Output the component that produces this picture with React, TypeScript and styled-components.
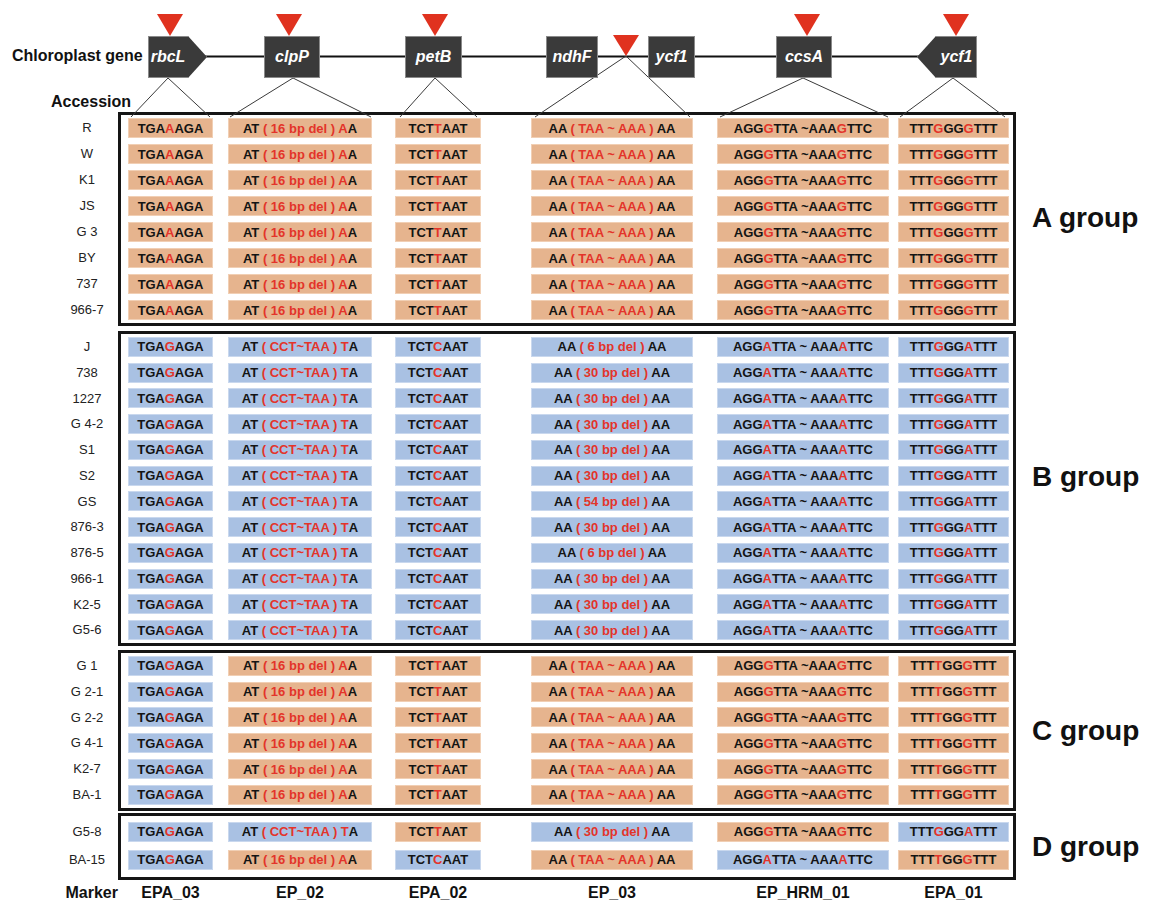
import React from 'react';
import styled, { createGlobalStyle } from 'styled-components';

const GlobalStyle = createGlobalStyle`
  html, body { margin: 0; padding: 0; background: #ffffff; }
  body { font-family: "Liberation Sans", Arial, sans-serif; color: #111111; }
  * { box-sizing: border-box; }
`;

const RED = '#e3342a';

const Page = styled.div`
  width: 1154px;
  height: 915px;
  overflow: hidden;
  background: #ffffff;
`;

const Header = styled.div`
  position: relative;
  height: 112px;
  display: flex;
  flex-direction: column;
`;

const GeneTitle = styled.div`
  margin: 47px 0 0 12px;
  font-size: 16px;
  font-weight: 700;
  line-height: 18px;
  white-space: nowrap;
`;

const AccessionTitle = styled.div`
  margin: 28px 0 0 51px;
  font-size: 16px;
  font-weight: 700;
  line-height: 18px;
`;

const MapSvg = styled.svg`
  position: absolute;
  left: 0;
  top: 0;
  overflow: visible;
  pointer-events: none;
`;

const GeneNode = styled.div<{ $x: number; $w: number; $arrow?: 'left' | 'right' }>`
  position: absolute;
  top: 36px;
  left: ${(p) => p.$x}px;
  width: ${(p) => p.$w}px;
  height: 42px;
  background: #3a3a3a;
  border: 1px solid #8a8a8a;
  color: #ffffff;
  font-size: 16px;
  font-weight: 700;
  font-style: italic;
  display: flex;
  align-items: center;
  justify-content: center;
  padding-right: ${(p) => (p.$arrow === 'right' ? 19 : 0)}px;
  padding-left: ${(p) => (p.$arrow === 'left' ? 19 : 0)}px;
  clip-path: ${(p) =>
    p.$arrow === 'right'
      ? 'polygon(0 0, calc(100% - 19px) 0, 100% 50%, calc(100% - 19px) 100%, 0 100%)'
      : p.$arrow === 'left'
      ? 'polygon(19px 0, 100% 0, 100% 100%, 19px 100%, 0 50%)'
      : 'none'};
`;

const Groups = styled.div`
  display: flex;
  flex-direction: column;
  padding-left: 56px;
`;

const GroupSection = styled.div<{ $mt: number }>`
  display: flex;
  align-items: center;
  margin-top: ${(p) => p.$mt}px;
`;

const LabelCol = styled.div<{ $pt: number }>`
  width: 62px;
  align-self: flex-start;
  padding-top: ${(p) => p.$pt + 3}px;
  display: flex;
  flex-direction: column;
`;

const RowLabel = styled.div<{ $h: number }>`
  height: ${(p) => p.$h}px;
  line-height: ${(p) => p.$h}px;
  text-align: center;
  font-size: 13px;
  color: #222222;
  white-space: nowrap;
`;

const Box = styled.div<{ $pt: number; $pb: number }>`
  width: 898px;
  border: 3px solid #151515;
  padding: ${(p) => p.$pt}px 4px ${(p) => p.$pb}px 0;
  display: flex;
  flex-direction: column;
`;

const Row = styled.div<{ $h: number }>`
  height: ${(p) => p.$h}px;
  display: flex;
  align-items: center;
`;

const Cell = styled.div<{ $ml: number; $w: number; $tone: 'o' | 'b' }>`
  margin-left: ${(p) => p.$ml}px;
  width: ${(p) => p.$w}px;
  height: 20px;
  flex: none;
  background: ${(p) => (p.$tone === 'o' ? '#e6b48e' : '#a9c1e3')};
  border: 1px solid ${(p) => (p.$tone === 'o' ? '#f1cfb4' : '#c9d8ee')};
  display: flex;
  align-items: center;
  justify-content: center;
  font-size: 13px;
  font-weight: 700;
  color: #141414;
  white-space: pre;
`;

const Red = styled.span`
  color: ${RED};
`;

const GroupName = styled.div<{ $lift: number }>`
  margin-left: 16px;
  margin-bottom: ${(p) => p.$lift * 2}px;
  font-size: 28px;
  font-weight: 700;
  white-space: nowrap;
`;

const MarkerRow = styled.div`
  display: flex;
  align-items: center;
  margin-top: 4px;
  height: 18px;
`;

const MarkerTitle = styled.div`
  width: 62px;
  text-align: right;
  font-size: 16px;
  font-weight: 700;
`;

const MarkerTrack = styled.div`
  display: flex;
  padding-left: 3px;
`;

const MarkerName = styled.div<{ $ml: number; $w: number }>`
  margin-left: ${(p) => p.$ml}px;
  width: ${(p) => p.$w}px;
  text-align: center;
  font-size: 16px;
  font-weight: 700;
  white-space: nowrap;
`;

const COLS = [
  { ml: 7, w: 85, name: 'EPA_03' },
  { ml: 15, w: 144, name: 'EP_02' },
  { ml: 23, w: 86, name: 'EPA_02' },
  { ml: 50, w: 162, name: 'EP_03' },
  { ml: 24, w: 172, name: 'EP_HRM_01' },
  { ml: 9, w: 111, name: 'EPA_01' },
];

type Tone = 'o' | 'b';
type CellData = { t: Tone; s: string };

const S = {
  c1o: { t: 'o', s: 'TGA[A]AGA' },
  c1b: { t: 'b', s: 'TGA[G]AGA' },
  c2o: { t: 'o', s: 'AT [( 16 bp del ) A]A' },
  c2b: { t: 'b', s: 'AT [( CCT~TAA ) T]A' },
  c3o: { t: 'o', s: 'TCT[T]AAT' },
  c3b: { t: 'b', s: 'TCT[C]AAT' },
  c4o: { t: 'o', s: 'AA [( TAA ~ AAA )] AA' },
  c5o: { t: 'o', s: 'AGG[G]TTA ~AAA[G]TTC' },
  c5b: { t: 'b', s: 'AGG[A]TTA ~ AAA[A]TTC' },
  c6a: { t: 'o', s: 'TTT[G]GG[G]TTT' },
  c6b: { t: 'b', s: 'TTT[G]GG[A]TTT' },
  c6c: { t: 'o', s: 'TTT[T]GG[G]TTT' },
} as Record<string, CellData>;

const c4b = (n: number): CellData => ({ t: 'b', s: `AA [( ${n} bp del )] AA` });

type Group = {
  name: string;
  mt: number;
  rowH: number;
  pt: number;
  pb: number;
  lift: number;
  rows: { label: string; cells: CellData[] }[];
};

const aRow = [S.c1o, S.c2o, S.c3o, S.c4o, S.c5o, S.c6a];
const bRow = (n: number) => [S.c1b, S.c2b, S.c3b, c4b(n), S.c5b, S.c6b];
const cRow = [S.c1b, S.c2o, S.c3o, S.c4o, S.c5o, S.c6c];

const GROUPS: Group[] = [
  {
    name: 'A group',
    mt: 0,
    rowH: 26,
    pt: 0,
    pb: 0,
    lift: 1,
    rows: ['R', 'W', 'K1', 'JS', 'G 3', 'BY', '737', '966-7'].map((l) => ({ label: l, cells: aRow })),
  },
  {
    name: 'B group',
    mt: 5,
    rowH: 25.75,
    pt: 0,
    pb: 0,
    lift: 12,
    rows: (
      [
        ['J', 6],
        ['738', 30],
        ['1227', 30],
        ['G 4-2', 30],
        ['S1', 30],
        ['S2', 30],
        ['GS', 54],
        ['876-3', 30],
        ['876-5', 6],
        ['966-1', 30],
        ['K2-5', 30],
        ['G5-6', 30],
      ] as [string, number][]
    ).map(([l, n]) => ({ label: l, cells: bRow(n) })),
  },
  {
    name: 'C group',
    mt: 4,
    rowH: 25.8,
    pt: 0,
    pb: 0,
    lift: -1,
    rows: ['G 1', 'G 2-1', 'G 2-2', 'G 4-1', 'K2-7', 'BA-1'].map((l) => ({ label: l, cells: cRow })),
  },
  {
    name: 'D group',
    mt: 2,
    rowH: 28,
    pt: 2,
    pb: 3,
    lift: -1,
    rows: [
      { label: 'G5-8', cells: [S.c1b, S.c2b, S.c3o, c4b(30), S.c5o, S.c6b] },
      { label: 'BA-15', cells: [S.c1b, S.c2o, S.c3b, S.c4o, S.c5b, S.c6c] },
    ],
  },
];

const Seq: React.FC<{ s: string }> = ({ s }) => {
  const parts = s.split(/(\[[^\]]*\])/).filter((p) => p.length > 0);
  return (
    <>
      {parts.map((p, i) =>
        p.startsWith('[') ? <Red key={i}>{p.slice(1, -1)}</Red> : <React.Fragment key={i}>{p}</React.Fragment>
      )}
    </>
  );
};

const GENES: { name: string; x: number; w: number; arrow?: 'left' | 'right' }[] = [
  { name: 'rbcL', x: 148, w: 59, arrow: 'right' },
  { name: 'clpP', x: 264, w: 56 },
  { name: 'petB', x: 405, w: 57 },
  { name: 'ndhF', x: 546, w: 52 },
  { name: 'ycf1', x: 648, w: 47 },
  { name: 'ccsA', x: 776, w: 56 },
  { name: 'ycf1', x: 917, w: 60, arrow: 'left' },
];

const TRI_TOP = [170, 289, 435, 807, 956];

const LINKS: [number, number, number, number][] = [
  [168, 78, 131, 117],
  [168, 78, 210, 117],
  [293, 78, 230, 117],
  [293, 78, 371, 117],
  [435, 78, 400, 117],
  [435, 78, 477, 117],
  [626, 56, 535, 117],
  [626, 56, 690, 117],
  [803, 78, 720, 117],
  [803, 78, 888, 117],
  [953, 78, 900, 117],
  [953, 78, 1005, 117],
];

const GeneMap: React.FC = () => (
  <>
    <MapSvg width={1154} height={120} viewBox="0 0 1154 120">
      <line x1={205} y1={56.5} x2={919} y2={56.5} stroke="#111" strokeWidth={2.2} />
      {LINKS.map(([x1, y1, x2, y2], i) => (
        <line key={i} x1={x1} y1={y1} x2={x2} y2={y2} stroke="#3a3a3a" strokeWidth={1} />
      ))}
      {TRI_TOP.map((cx) => (
        <polygon key={cx} points={`${cx - 13},14 ${cx + 13},14 ${cx},36`} fill="#e0321f" />
      ))}
      <polygon points="613,35 639,35 626,56" fill="#e0321f" />
    </MapSvg>
    {GENES.map((g, i) => (
      <GeneNode key={i} $x={g.x} $w={g.w} $arrow={g.arrow}>
        {g.name}
      </GeneNode>
    ))}
  </>
);

export default function App() {
  return (
    <>
      <GlobalStyle />
      <Page>
        <Header>
          <GeneTitle>Chloroplast gene</GeneTitle>
          <AccessionTitle>Accession</AccessionTitle>
          <GeneMap />
        </Header>
        <Groups>
          {GROUPS.map((g) => (
            <GroupSection key={g.name} $mt={g.mt}>
              <LabelCol $pt={g.pt}>
                {g.rows.map((r) => (
                  <RowLabel key={r.label} $h={g.rowH}>
                    {r.label}
                  </RowLabel>
                ))}
              </LabelCol>
              <Box $pt={g.pt} $pb={g.pb}>
                {g.rows.map((r) => (
                  <Row key={r.label} $h={g.rowH}>
                    {r.cells.map((c, ci) => (
                      <Cell key={ci} $ml={COLS[ci].ml} $w={COLS[ci].w} $tone={c.t}>
                        <Seq s={c.s} />
                      </Cell>
                    ))}
                  </Row>
                ))}
              </Box>
              <GroupName $lift={g.lift}>{g.name}</GroupName>
            </GroupSection>
          ))}
          <MarkerRow>
            <MarkerTitle>Marker</MarkerTitle>
            <MarkerTrack>
              {COLS.map((c) => (
                <MarkerName key={c.name} $ml={c.ml} $w={c.w}>
                  {c.name}
                </MarkerName>
              ))}
            </MarkerTrack>
          </MarkerRow>
        </Groups>
      </Page>
    </>
  );
}
